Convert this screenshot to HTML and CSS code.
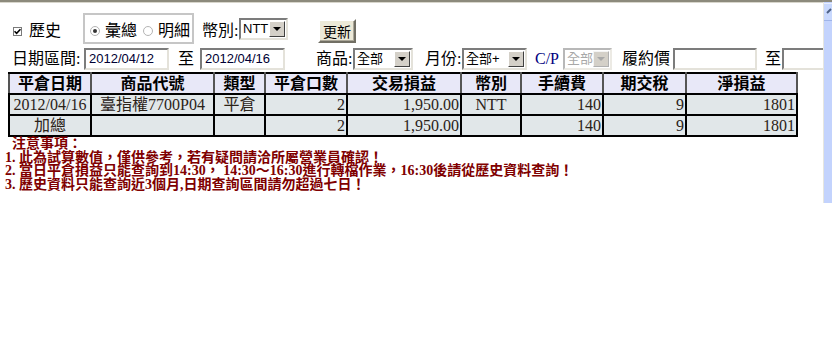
FILE: index.html
```html
<!DOCTYPE html>
<html lang="zh-Hant">
<head>
    <meta charset="UTF-8">
    <title>平倉損益查詢</title>
    <link rel="stylesheet" href="styles.css">
</head>
<body>

    <div class="frame">
        <div class="content">

            <div class="row row-top">
                <span class="check">
                    <svg width="7" height="7" viewBox="0 0 7 7"><path d="M0.5 3.2 L2.6 5.3 L6.5 1.2" fill="none" stroke="#000" stroke-width="1.6"/></svg>
                </span>
                <span class="lbl lbl-history">歷史</span>

                <div class="radio-group">
                    <span class="radio on"></span><span class="lbl">彙總</span>
                    <span class="radio"></span><span class="lbl">明細</span>
                </div>

                <span class="lbl lbl-cur">幣別:</span>
                <div class="select sel-cur"><span class="val">NTT</span><span class="arrow"></span></div>

                <button class="btn">更新</button>
            </div>

            <div class="row row-filter">
                <span class="lbl w-date">日期區間:</span>
                <div class="input w-day">2012/04/12</div>
                <span class="lbl to">至</span>
                <div class="input w-day">2012/04/16</div>

                <span class="lbl w-prod">商品:</span>
                <div class="select sel-prod"><span class="val">全部</span><span class="arrow"></span></div>

                <span class="lbl w-month">月份:</span>
                <div class="select sel-month"><span class="val">全部+</span><span class="arrow"></span></div>

                <span class="lbl cp">C/P</span>
                <div class="select sel-cp disabled"><span class="val">全部</span><span class="arrow"></span></div>

                <span class="lbl w-strike">履約價</span>
                <div class="input w-price"></div>
                <span class="lbl to2">至</span>
                <div class="input w-price2"></div>
            </div>

            <table class="result">
                <colgroup>
                    <col class="c1"><col class="c2"><col class="c3">
                    <col class="c4"><col class="c5"><col class="c6">
                    <col class="c7"><col class="c8"><col class="c9">
                </colgroup>
                <tr class="head">
                    <th>平倉日期</th><th>商品代號</th><th>類型</th><th>平倉口數</th><th>交易損益</th>
                    <th>幣別</th><th>手續費</th><th>期交稅</th><th>淨損益</th>
                </tr>
                <tr>
                    <td class="c">2012/04/16</td><td class="c">臺指權7700P04</td><td class="c">平倉</td>
                    <td class="r">2</td><td class="r">1,950.00</td><td class="c">NTT</td>
                    <td class="r">140</td><td class="r">9</td><td class="r">1801</td>
                </tr>
                <tr>
                    <td class="c">加總</td><td></td><td></td>
                    <td class="r">2</td><td class="r">1,950.00</td><td></td>
                    <td class="r">140</td><td class="r">9</td><td class="r">1801</td>
                </tr>
            </table>

            <div class="notes">
                <div class="notes-title">注意事項：</div>
                <div>1. 此為試算數值，僅供參考，若有疑問請洽所屬營業員確認！</div>
                <div>2. 當日平倉損益只能查詢到14:30， 14:30～16:30進行轉檔作業，16:30後請從歷史資料查詢！</div>
                <div>3. 歷史資料只能查詢近3個月,日期查詢區間請勿超過七日！</div>
            </div>

        </div>

        <div class="scrollbar">
            <div class="scroll-btn">
                <svg width="9" height="14" viewBox="0 0 9 14"><path d="M3 9 L7 5" stroke="#4d6185" stroke-width="2" fill="none"/></svg>
            </div>
        </div>
    </div>

</body>
</html>
```

FILE: styles.css
```css
body {
    margin: 0;
    padding: 0;
    background: #fff;
    font-family: 'Liberation Serif', 'Noto Sans CJK TC', serif;
    font-size: 16px;
    color: #000;
}

.frame {
    display: flex;
    height: 201px;
    border-top: 2px solid #8c8a7c;
    box-shadow: inset 0 1px 0 #d8d6cc;
}
.content {
    width: 823px;
    overflow: hidden;
}

.row {
    display: flex;
    align-items: center;
    white-space: nowrap;
}
.row > * {
    flex-shrink: 0;
}
.lbl {
    display: inline-block;
    line-height: 18px;
}

/* first row */
.row-top {
    height: 31px;
    margin-top: 11px;
    padding-left: 13px;
}
.row-top .lbl {
    margin-top: 5px;
}
.check {
    width: 7px;
    height: 7px;
    border: 1px solid #7a7a7a;
    background: #fff;
    display: flex;
    align-items: center;
    justify-content: center;
    margin-top: 6px;
}
.row-top .lbl-history {
    margin-left: 7px;
}
.radio-group {
    display: flex;
    align-items: center;
    width: 104px;
    height: 27px;
    margin-left: 22px;
    padding-left: 3px;
    border: 2px solid #c6c6c6;
}
.radio {
    width: 8px;
    height: 8px;
    border: 1px solid #b4b4b4;
    border-radius: 50%;
    background: #fff;
    margin: 5px 5px 0 2px;
    position: relative;
}
.radio.on::after {
    content: "";
    position: absolute;
    left: 2px;
    top: 2px;
    width: 4px;
    height: 4px;
    border-radius: 50%;
    background: #333;
}
.radio-group .lbl + .radio {
    margin-left: 6px;
}
.row-top .lbl-cur {
    margin-left: 8px;
    width: 37px;
}

.select {
    display: flex;
    align-items: center;
    height: 18px;
    border: 2px solid;
    border-color: #7c7c7c #e4e2da #e4e2da #7c7c7c;
    background: #fff;
    font-family: 'Liberation Sans', 'Noto Sans CJK TC', sans-serif;
    font-size: 13px;
    box-sizing: content-box;
}
.select .val {
    flex: 1;
    padding-left: 2px;
    line-height: 18px;
}
.select .arrow {
    width: 14px;
    height: 14px;
    margin-right: 1px;
    background: #d4d0c8;
    border: 1px solid;
    border-color: #fff #404040 #404040 #fff;
    position: relative;
}
.select .arrow::after {
    content: "";
    position: absolute;
    left: 3px;
    top: 5px;
    border-left: 4px solid transparent;
    border-right: 4px solid transparent;
    border-top: 4px solid #000;
}
.select.disabled {
    color: #a8a8a8;
    border-color: #b8b8b8 #eceae4 #eceae4 #b8b8b8;
}
.select.disabled .arrow {
    border-color: #f4f4f4 #b0b0b0 #b0b0b0 #f4f4f4;
}
.select.disabled .arrow::after {
    border-top-color: #a8a8a8;
}
.sel-cur { width: 45px; }
.sel-prod { width: 56px; }
.sel-month { width: 61px; }
.sel-cp { width: 45px; }

.btn {
    width: 38px;
    height: 24px;
    margin: 4px 0 0 30px;
    padding: 0;
    font-family: 'Liberation Serif', 'Noto Sans CJK TC', serif;
    font-size: 14px;
    background: #ece9d8;
    border: 2px solid;
    border-color: #fff #716f64 #716f64 #fff;
    box-shadow: inset -1px -1px 0 #aca899;
}

/* second row */
.row-filter {
    height: 23px;
    margin-top: 3px;
    padding-left: 12px;
}
.input {
    height: 18px;
    line-height: 18px;
    border: 2px solid;
    border-color: #7c7c7c #e4e2da #e4e2da #7c7c7c;
    padding-left: 3px;
    font-family: 'Liberation Sans', 'Noto Sans CJK TC', sans-serif;
    font-size: 13px;
    color: #000033;
    box-sizing: content-box;
}
.w-date { width: 72px; }
.w-day { width: 78px; }
.to { margin-left: 9px; width: 22px; }
.w-prod { margin-left: 31px; width: 37px; }
.w-month { margin-left: 12px; width: 37px; }
.cp {
    margin-left: 8px;
    width: 28px;
    color: #000080;
}
.w-strike { margin-left: 10px; width: 51px; }
.w-price { width: 77px; }
.to2 { margin-left: 8px; width: 17px; }
.w-price2 { width: 60px; }

/* result table */
.result {
    margin: 2px 0 0 8px;
    width: 789px;
    table-layout: fixed;
    border-collapse: collapse;
    border: 2px solid #000;
}
.result .c1 { width: 82px; }
.result .c2 { width: 123px; }
.result .c3 { width: 51px; }
.result .c4 { width: 82px; }
.result .c5 { width: 114px; }
.result .c6 { width: 60px; }
.result .c7 { width: 82px; }
.result .c8 { width: 83px; }
.result .c9 { width: 111px; }
.result th,
.result td {
    border: 2px solid #000;
    padding: 0 1px;
    height: 19px;
    line-height: 19px;
    font-size: 16px;
    white-space: nowrap;
    overflow: hidden;
}
.result th {
    background: #e8e8f8;
    font-weight: bold;
    border-color: #000 #555 #000 #555;
}
.result td {
    background: #e1e7e9;
    color: #2a2218;
}
.result .c { text-align: center; }
.result .r { text-align: right; }

/* notes */
.notes {
    margin: 0 0 0 5px;
    color: #800000;
    font-size: 14px;
    font-weight: bold;
    line-height: 13.5px;
}
.notes-title {
    padding-left: 7px;
}

/* scrollbar */
.scrollbar {
    width: 8px;
    border-left: 1px solid #e6e6e0;
    background: #c3d3fd;
    overflow: hidden;
}
.scroll-btn {
    height: 16px;
    margin-top: 1px;
    background: #c8d8fd;
    border-top: 1px solid #e8eefe;
    border-bottom: 1px solid #9fb4e8;
}
```
